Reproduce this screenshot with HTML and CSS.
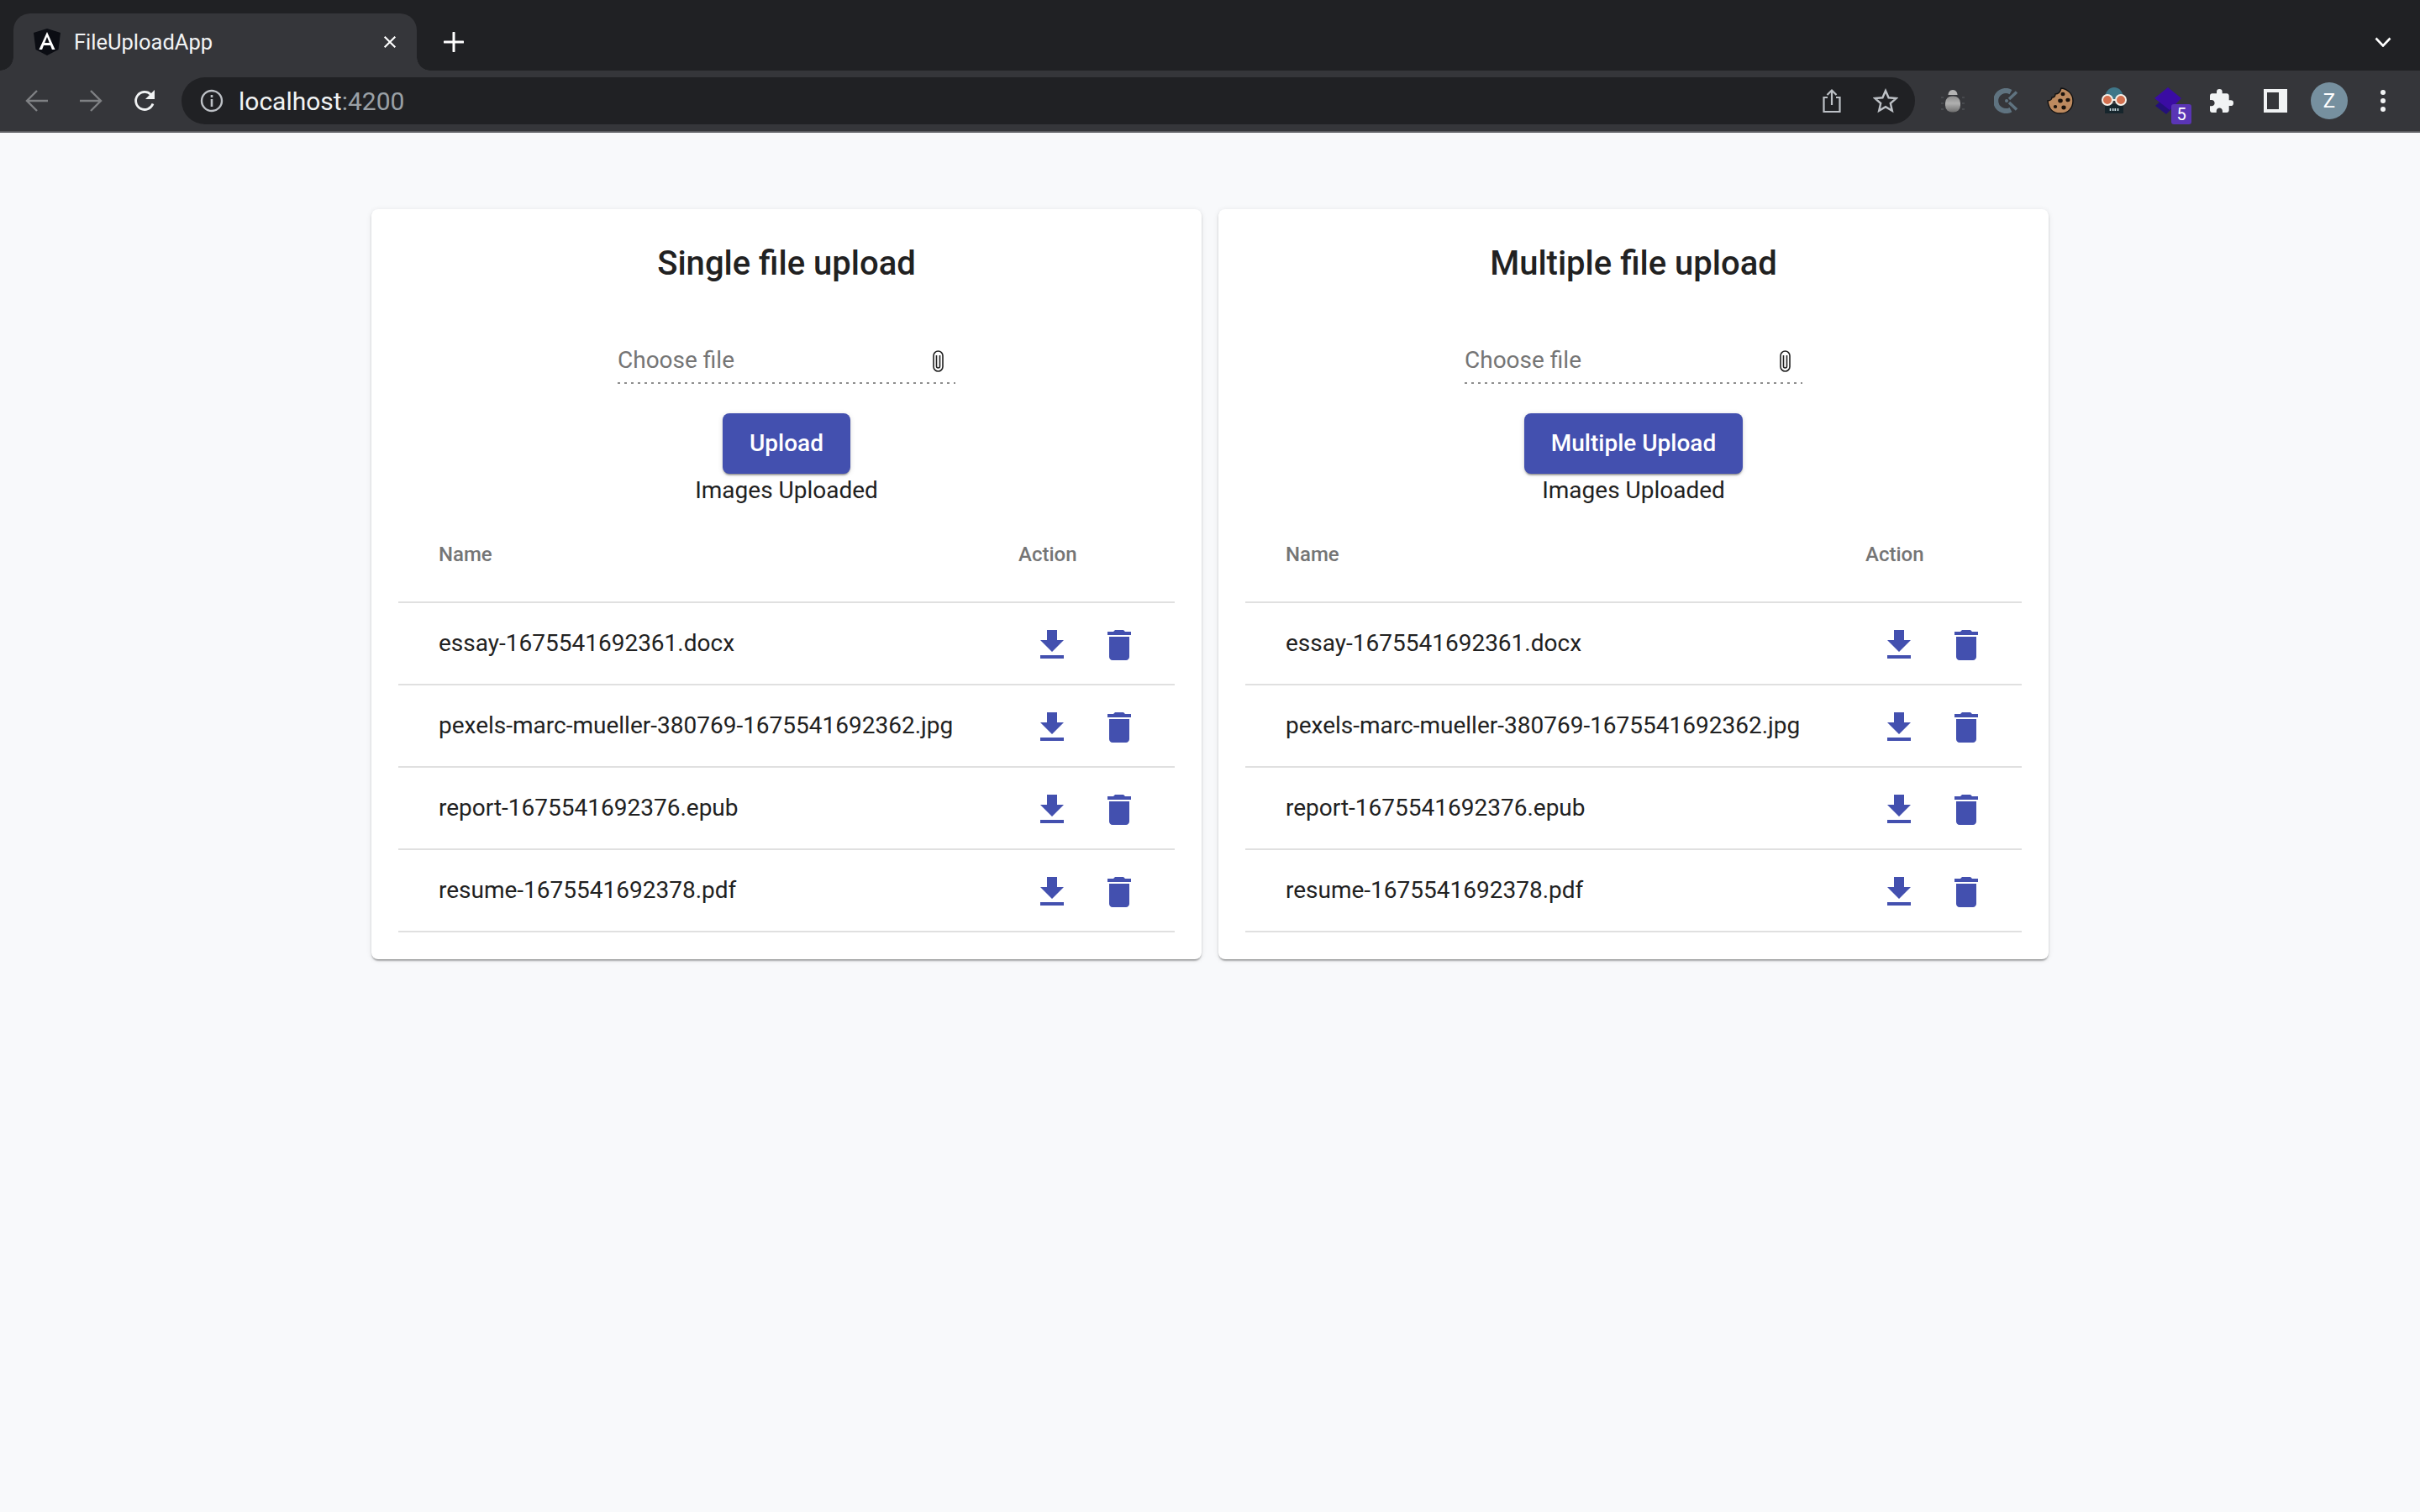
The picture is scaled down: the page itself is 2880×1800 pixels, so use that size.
FILE: index.html
```html
<!DOCTYPE html>
<html lang="en">
<head>
    <meta charset="UTF-8">
    <title>FileUploadApp</title>
    <link rel="stylesheet" href="styles.css">
</head>
<body>
    <div class="tabstrip">
        <div class="tab">
            <svg class="favicon" viewBox="0 0 32 32"><path d="M16 0 0 5l2.500 20L16 32l13.500-7L32 5z" fill="#0b0d13"/><path d="M16 4 6.500 25h3.600l1.900-5h8l1.900 5h3.600zm-2.800 13L16 10l2.800 7z" fill="#fff"/></svg>
            <span class="tab-title">FileUploadApp</span>
            <svg class="tab-close" viewBox="0 0 20 20"><path d="M3 3l14 14M17 3 3 17" stroke="#fff" stroke-width="2.400"/></svg>
        </div>
        <svg class="new-tab" viewBox="0 0 24 24"><path d="M12 1v22M1 12h22" stroke="#fff" stroke-width="3" stroke-linecap="round"/></svg>
        <svg class="tab-list" viewBox="0 0 20 12"><path d="M1.500 1.500 10 10.500l8.500-9" stroke="#fff" stroke-width="2.600" fill="none"/></svg>
    </div>

    <div class="toolbar">
        <span class="tool"><svg viewBox="0 0 28 28" width="28"><path d="M27 14H3M14 2 2 14l12 12" stroke="#7f8184" stroke-width="2.400" fill="none"/></svg></span>
        <span class="tool"><svg viewBox="0 0 28 28" width="28"><path d="M1 14h24M14 2l12 12-12 12" stroke="#7f8184" stroke-width="2.400" fill="none"/></svg></span>
        <span class="tool"><svg viewBox="0 0 28 28" width="28"><path d="M24 17.500A10.500 10.500 0 1 1 21.500 6.500" stroke="#f1f3f4" stroke-width="2.800" fill="none"/><path d="M26 1v11H15z" fill="#f1f3f4"/></svg></span>
        <div class="omnibox">
            <svg class="info" viewBox="0 0 28 28" width="28"><circle cx="14" cy="14" r="12" stroke="#bdc1c6" stroke-width="2.400" fill="none"/><path d="M14 12v9M14 7v3" stroke="#bdc1c6" stroke-width="2.600"/></svg>
            <span class="url">localhost<span class="url-port">:4200</span></span>
            <span class="omni-icon"><svg viewBox="0 0 24 30" width="24"><path d="M7 11H2.500v17h19V11H17M12 20V3M6.500 8 12 2.500 17.500 8" stroke="#bdc1c6" stroke-width="2.200" fill="none"/></svg></span>
            <span class="omni-icon"><svg viewBox="0 0 30 30" width="30"><path d="m15 3 3.600 8.300 9 .8-6.800 5.900 2 8.800-7.800-4.700-7.800 4.700 2-8.800-6.800-5.900 9-.8z" stroke="#bdc1c6" stroke-width="2.400" fill="none"/></svg></span>
        </div>
        <div class="extensions">
            <span class="tool"><svg viewBox="0 0 28 28" width="28"><defs><linearGradient id="bug-body" x1="0" y1="0" x2="0" y2="1"><stop offset="0" stop-color="#8c8c8c"/><stop offset="0.45" stop-color="#b0b0b0"/><stop offset="1" stop-color="#6f6f6f"/></linearGradient></defs><path d="M8.500 7c0-3 2-6 5.500-6s5.500 3 5.500 6z" fill="#b4b4b4"/><rect x="5" y="8.500" width="18" height="19" rx="8" fill="url(#bug-body)"/><path d="M0 10h3M25 10h3M0 17h3M25 17h3M0 24h3M25 24h3" stroke="#5b5c60" stroke-width="1"/></svg></span>
            <span class="tool"><svg viewBox="0 0 30 30" width="30"><path d="M20 4.500A12 12 0 1 0 20 25.500" stroke="#5f7380" stroke-width="6" fill="none"/><path d="M27 4.500 18 13M18 17l9 8.500" stroke="#5f7380" stroke-width="3.500" fill="none"/><circle cx="15" cy="15" r="2" fill="#5f7380"/></svg></span>
            <span class="tool"><svg viewBox="0 0 32 32" width="32"><path d="M17 1c8 1 14 7 14 15 0 9-6 15-15 15C8 31 2 26 1 16c3 0 5-2 5-4 3 0 4-2 4-4 4 0 6-3 7-7z" fill="#bd8a5f" stroke="#111" stroke-width="1.400"/><g fill="#1a120c"><ellipse cx="19" cy="8" rx="2.500" ry="2.200"/><ellipse cx="25" cy="15" rx="2.600" ry="2.300"/><ellipse cx="16" cy="16" rx="2.800" ry="2.400"/><ellipse cx="20" cy="24" rx="2.600" ry="2.400"/><ellipse cx="10" cy="23" rx="2.200" ry="2"/></g></svg></span>
            <span class="tool"><svg viewBox="0 0 32 32" width="32"><path d="M5 14C5 5 10 0 16 0s11 5 11 14z" fill="#3f7688"/><path d="M5 20h22v11H5z" fill="#16252c"/><circle cx="8" cy="15" r="6" fill="#d3704f" stroke="#f4efe8" stroke-width="2"/><circle cx="24" cy="15" r="6" fill="#d3704f" stroke="#f4efe8" stroke-width="2"/><path d="M13 15h6" stroke="#f4efe8" stroke-width="2"/><path d="M11.500 25v3M14.700 25v3M17.300 25v3M20.500 25v3" stroke="#cfe0e6" stroke-width="1.600"/></svg></span>
            <span class="tool ext-stack">
                <svg viewBox="0 0 32 32" width="32"><path d="M12 12 22 24 14 32 1 22z" fill="#24107a"/><path d="M16 0l16 13-14 14L0 13z" fill="#3a0ca3"/></svg>
                <span class="ext-badge">5</span>
            </span>
            <span class="tool"><svg viewBox="2 1 21 21" width="28"><path d="M20.500 11H19V7c0-1.100-.9-2-2-2h-4V3.500a2.500 2.500 0 0 0-5 0V5H4c-1.100 0-1.990.9-1.990 2v3.800H3.500c1.490 0 2.700 1.210 2.700 2.700s-1.210 2.700-2.700 2.700H2V20c0 1.100.9 2 2 2h3.800v-1.500c0-1.490 1.210-2.700 2.700-2.700 1.490 0 2.700 1.210 2.700 2.700V22H17c1.100 0 2-.9 2-2v-4h1.500a2.500 2.500 0 0 0 0-5z" fill="#f1f3f4"/></svg></span>
            <span class="tool"><svg viewBox="0 0 28 28" width="28"><path d="M0 0h28v28H0zM4 4v20h14V4z" fill="#f1f3f4" fill-rule="evenodd"/></svg></span>
            <span class="tool"><span class="avatar">Z</span></span>
            <span class="tool"><svg viewBox="0 0 8 28" width="8"><g fill="#f1f3f4"><circle cx="4" cy="4" r="3"/><circle cx="4" cy="14" r="3"/><circle cx="4" cy="24" r="3"/></g></svg></span>
        </div>
    </div>

    <main class="page">
        <section class="card">
            <h2 class="card-title">Single file upload</h2>
            <div class="file-field">
                <span class="file-label">Choose file</span>
                <svg class="clip"><use href="#ic-clip"/></svg>
            </div>
            <button class="upload-btn">Upload</button>
            <p class="uploaded-label">Images Uploaded</p>
            <table class="files">
                <thead><tr><th>Name</th><th class="col-action">Action</th></tr></thead>
                <tbody>
                    <tr><td>essay-1675541692361.docx</td><td class="col-action"><span class="actions"><svg class="mat-icon"><use href="#ic-download"/></svg><svg class="mat-icon"><use href="#ic-delete"/></svg></span></td></tr>
                    <tr><td>pexels-marc-mueller-380769-1675541692362.jpg</td><td class="col-action"><span class="actions"><svg class="mat-icon"><use href="#ic-download"/></svg><svg class="mat-icon"><use href="#ic-delete"/></svg></span></td></tr>
                    <tr><td>report-1675541692376.epub</td><td class="col-action"><span class="actions"><svg class="mat-icon"><use href="#ic-download"/></svg><svg class="mat-icon"><use href="#ic-delete"/></svg></span></td></tr>
                    <tr><td>resume-1675541692378.pdf</td><td class="col-action"><span class="actions"><svg class="mat-icon"><use href="#ic-download"/></svg><svg class="mat-icon"><use href="#ic-delete"/></svg></span></td></tr>
                </tbody>
            </table>
        </section>

        <section class="card">
            <h2 class="card-title">Multiple file upload</h2>
            <div class="file-field">
                <span class="file-label">Choose file</span>
                <svg class="clip"><use href="#ic-clip"/></svg>
            </div>
            <button class="upload-btn">Multiple Upload</button>
            <p class="uploaded-label">Images Uploaded</p>
            <table class="files">
                <thead><tr><th>Name</th><th class="col-action">Action</th></tr></thead>
                <tbody>
                    <tr><td>essay-1675541692361.docx</td><td class="col-action"><span class="actions"><svg class="mat-icon"><use href="#ic-download"/></svg><svg class="mat-icon"><use href="#ic-delete"/></svg></span></td></tr>
                    <tr><td>pexels-marc-mueller-380769-1675541692362.jpg</td><td class="col-action"><span class="actions"><svg class="mat-icon"><use href="#ic-download"/></svg><svg class="mat-icon"><use href="#ic-delete"/></svg></span></td></tr>
                    <tr><td>report-1675541692376.epub</td><td class="col-action"><span class="actions"><svg class="mat-icon"><use href="#ic-download"/></svg><svg class="mat-icon"><use href="#ic-delete"/></svg></span></td></tr>
                    <tr><td>resume-1675541692378.pdf</td><td class="col-action"><span class="actions"><svg class="mat-icon"><use href="#ic-download"/></svg><svg class="mat-icon"><use href="#ic-delete"/></svg></span></td></tr>
                </tbody>
            </table>
        </section>
    </main>

    <svg class="icon-defs">
        <symbol id="ic-download" viewBox="0 0 24 24"><path d="M19 9h-4V3H9v6H5l7 7 7-7zM5 18v2h14v-2H5z"/></symbol>
        <symbol id="ic-delete" viewBox="0 0 24 24"><path d="M6 19c0 1.100.9 2 2 2h8c1.100 0 2-.9 2-2V7H6v12zM19 4h-3.500l-1-1h-5l-1 1H5v2h14V4z"/></symbol>
        <symbol id="ic-clip" viewBox="0 0 13 26"><path d="M1 6.500a5.500 5.500 0 0 1 11 0v13a5.500 5.500 0 0 1-11 0zM4.500 6v13a2 2 0 0 0 4 0V6" fill="none" stroke="#212121" stroke-width="1.600"/></symbol>
    </svg>
</body>
</html>
```

FILE: styles.css
```css
* {
    margin: 0;
    padding: 0;
    box-sizing: border-box;
}
html, body {
    width: 100%;
    height: 100%;
    overflow: hidden;
}
body {
    font-family: Roboto, "Liberation Sans", sans-serif;
    background-color: #f8f9fb;
    color: #212121;
}
svg {
    display: block;
}
.icon-defs {
    width: 0;
    height: 0;
    position: absolute;
}

/* browser chrome */
.tabstrip {
    height: 84px;
    background-color: #202124;
    display: flex;
    align-items: flex-end;
    padding-left: 16px;
}
.tab {
    width: 480px;
    height: 68px;
    background-color: #35363a;
    border-radius: 20px 20px 0 0;
    display: flex;
    align-items: center;
    padding: 0 24px;
    position: relative;
    flex-shrink: 0;
}
.tab::before,
.tab::after {
    content: "";
    position: absolute;
    bottom: 0;
    width: 16px;
    height: 16px;
}
.tab::before {
    left: -16px;
    background: radial-gradient(circle at 0 0, #202124 15.500px, #35363a 16px);
}
.tab::after {
    right: -16px;
    background: radial-gradient(circle at 100% 0, #202124 15.500px, #35363a 16px);
}
.favicon {
    width: 32px;
    height: 32px;
    margin-right: 16px;
}
.tab-title {
    font-size: 25.500px;
    color: #f1f3f4;
    flex: 1;
}
.tab-close {
    width: 18px;
    height: 18px;
    margin-right: -1px;
}
.new-tab {
    width: 24px;
    height: 24px;
    margin: 0 0 22px 32px;
}
.tab-list {
    width: 20px;
    height: 12px;
    margin: 0 34px 28px auto;
}
.toolbar {
    height: 74px;
    background-color: #35363a;
    border-bottom: 2px solid #5c5d61;
    display: flex;
    align-items: center;
    padding: 0 12px;
}
.tool {
    width: 64px;
    height: 64px;
    display: flex;
    align-items: center;
    justify-content: center;
    flex-shrink: 0;
    position: relative;
}
.omnibox {
    flex: 1;
    height: 56px;
    margin-left: 12px;
    background-color: #202124;
    border-radius: 28px;
    display: flex;
    align-items: center;
    padding: 0 0 0 22px;
}
.info {
    margin-right: 18px;
}
.url {
    font-size: 30px;
    color: #f1f3f4;
    flex: 1;
}
.url-port {
    color: #9aa0a6;
}
.omni-icon {
    width: 64px;
    display: flex;
    justify-content: center;
}
.omni-icon:last-child {
    margin-right: 3px;
}
.extensions {
    display: flex;
    margin-left: 13px;
}
.ext-badge {
    position: absolute;
    right: 4px;
    bottom: 4px;
    width: 24px;
    height: 24px;
    background-color: #5a35b5;
    border-radius: 3px;
    color: #fff;
    font-size: 20px;
    line-height: 24px;
    text-align: center;
}
.avatar {
    width: 44px;
    height: 44px;
    border-radius: 50%;
    background-color: #76909f;
    color: #fff;
    font-size: 24px;
    line-height: 44px;
    text-align: center;
}

/* page */
.page {
    display: flex;
    justify-content: center;
    gap: 20px;
    padding-top: 91px;
}
.card {
    width: 988px;
    padding: 32px;
    background-color: #fff;
    border-radius: 8px;
    box-shadow: 0 3px 2px -2px rgba(0, 0, 0, 0.3), 0 2px 2px 0 rgba(0, 0, 0, 0.18), 0 1px 6px 0 rgba(0, 0, 0, 0.1);
    display: flex;
    flex-direction: column;
    align-items: center;
}
.card-title {
    font-size: 40px;
    font-weight: 500;
    line-height: 64px;
    padding-top: 1px;
    height: 65px;
}
.file-field {
    width: 402px;
    height: 111px;
    padding: 0 14px 12px 0;
    display: flex;
    align-items: flex-end;
    justify-content: space-between;
    background-image: linear-gradient(to right, #8e8e8e 33%, transparent 33%);
    background-size: 8px 2px;
    background-position: 0 100%;
    background-repeat: repeat-x;
}
.file-label {
    font-size: 28px;
    line-height: 32px;
    color: #757575;
}
.clip {
    width: 13px;
    height: 26px;
    margin-bottom: 2px;
}
.upload-btn {
    height: 72px;
    margin-top: 35px;
    padding: 0 32px 2px;
    background-color: #4350af;
    color: #fff;
    border: none;
    border-radius: 8px;
    font-family: inherit;
    font-size: 28px;
    font-weight: 500;
    box-shadow: 0 3px 2px -2px rgba(0, 0, 0, 0.3), 0 2px 2px 0 rgba(0, 0, 0, 0.18), 0 1px 6px 0 rgba(0, 0, 0, 0.12);
}
.uploaded-label {
    font-size: 28px;
    line-height: 36px;
    margin-top: 2px;
}
.files {
    width: 100%;
    border-collapse: collapse;
}
.files th {
    height: 115px;
    padding: 1px 0 0 48px;
    font-size: 24px;
    font-weight: 500;
    color: #757575;
    text-align: left;
    border-bottom: 2px solid #e0e0e0;
}
.files td {
    height: 98px;
    padding: 0 0 2px 48px;
    font-size: 28px;
    border-bottom: 2px solid #e0e0e0;
}
.files .col-action {
    width: 186px;
    padding-left: 0;
}
.files td.col-action {
    padding-bottom: 0;
}
.actions {
    display: flex;
    gap: 32px;
    padding: 4px 0 0 16px;
}
.mat-icon {
    width: 48px;
    height: 48px;
    fill: #4350af;
    flex-shrink: 0;
}
```
